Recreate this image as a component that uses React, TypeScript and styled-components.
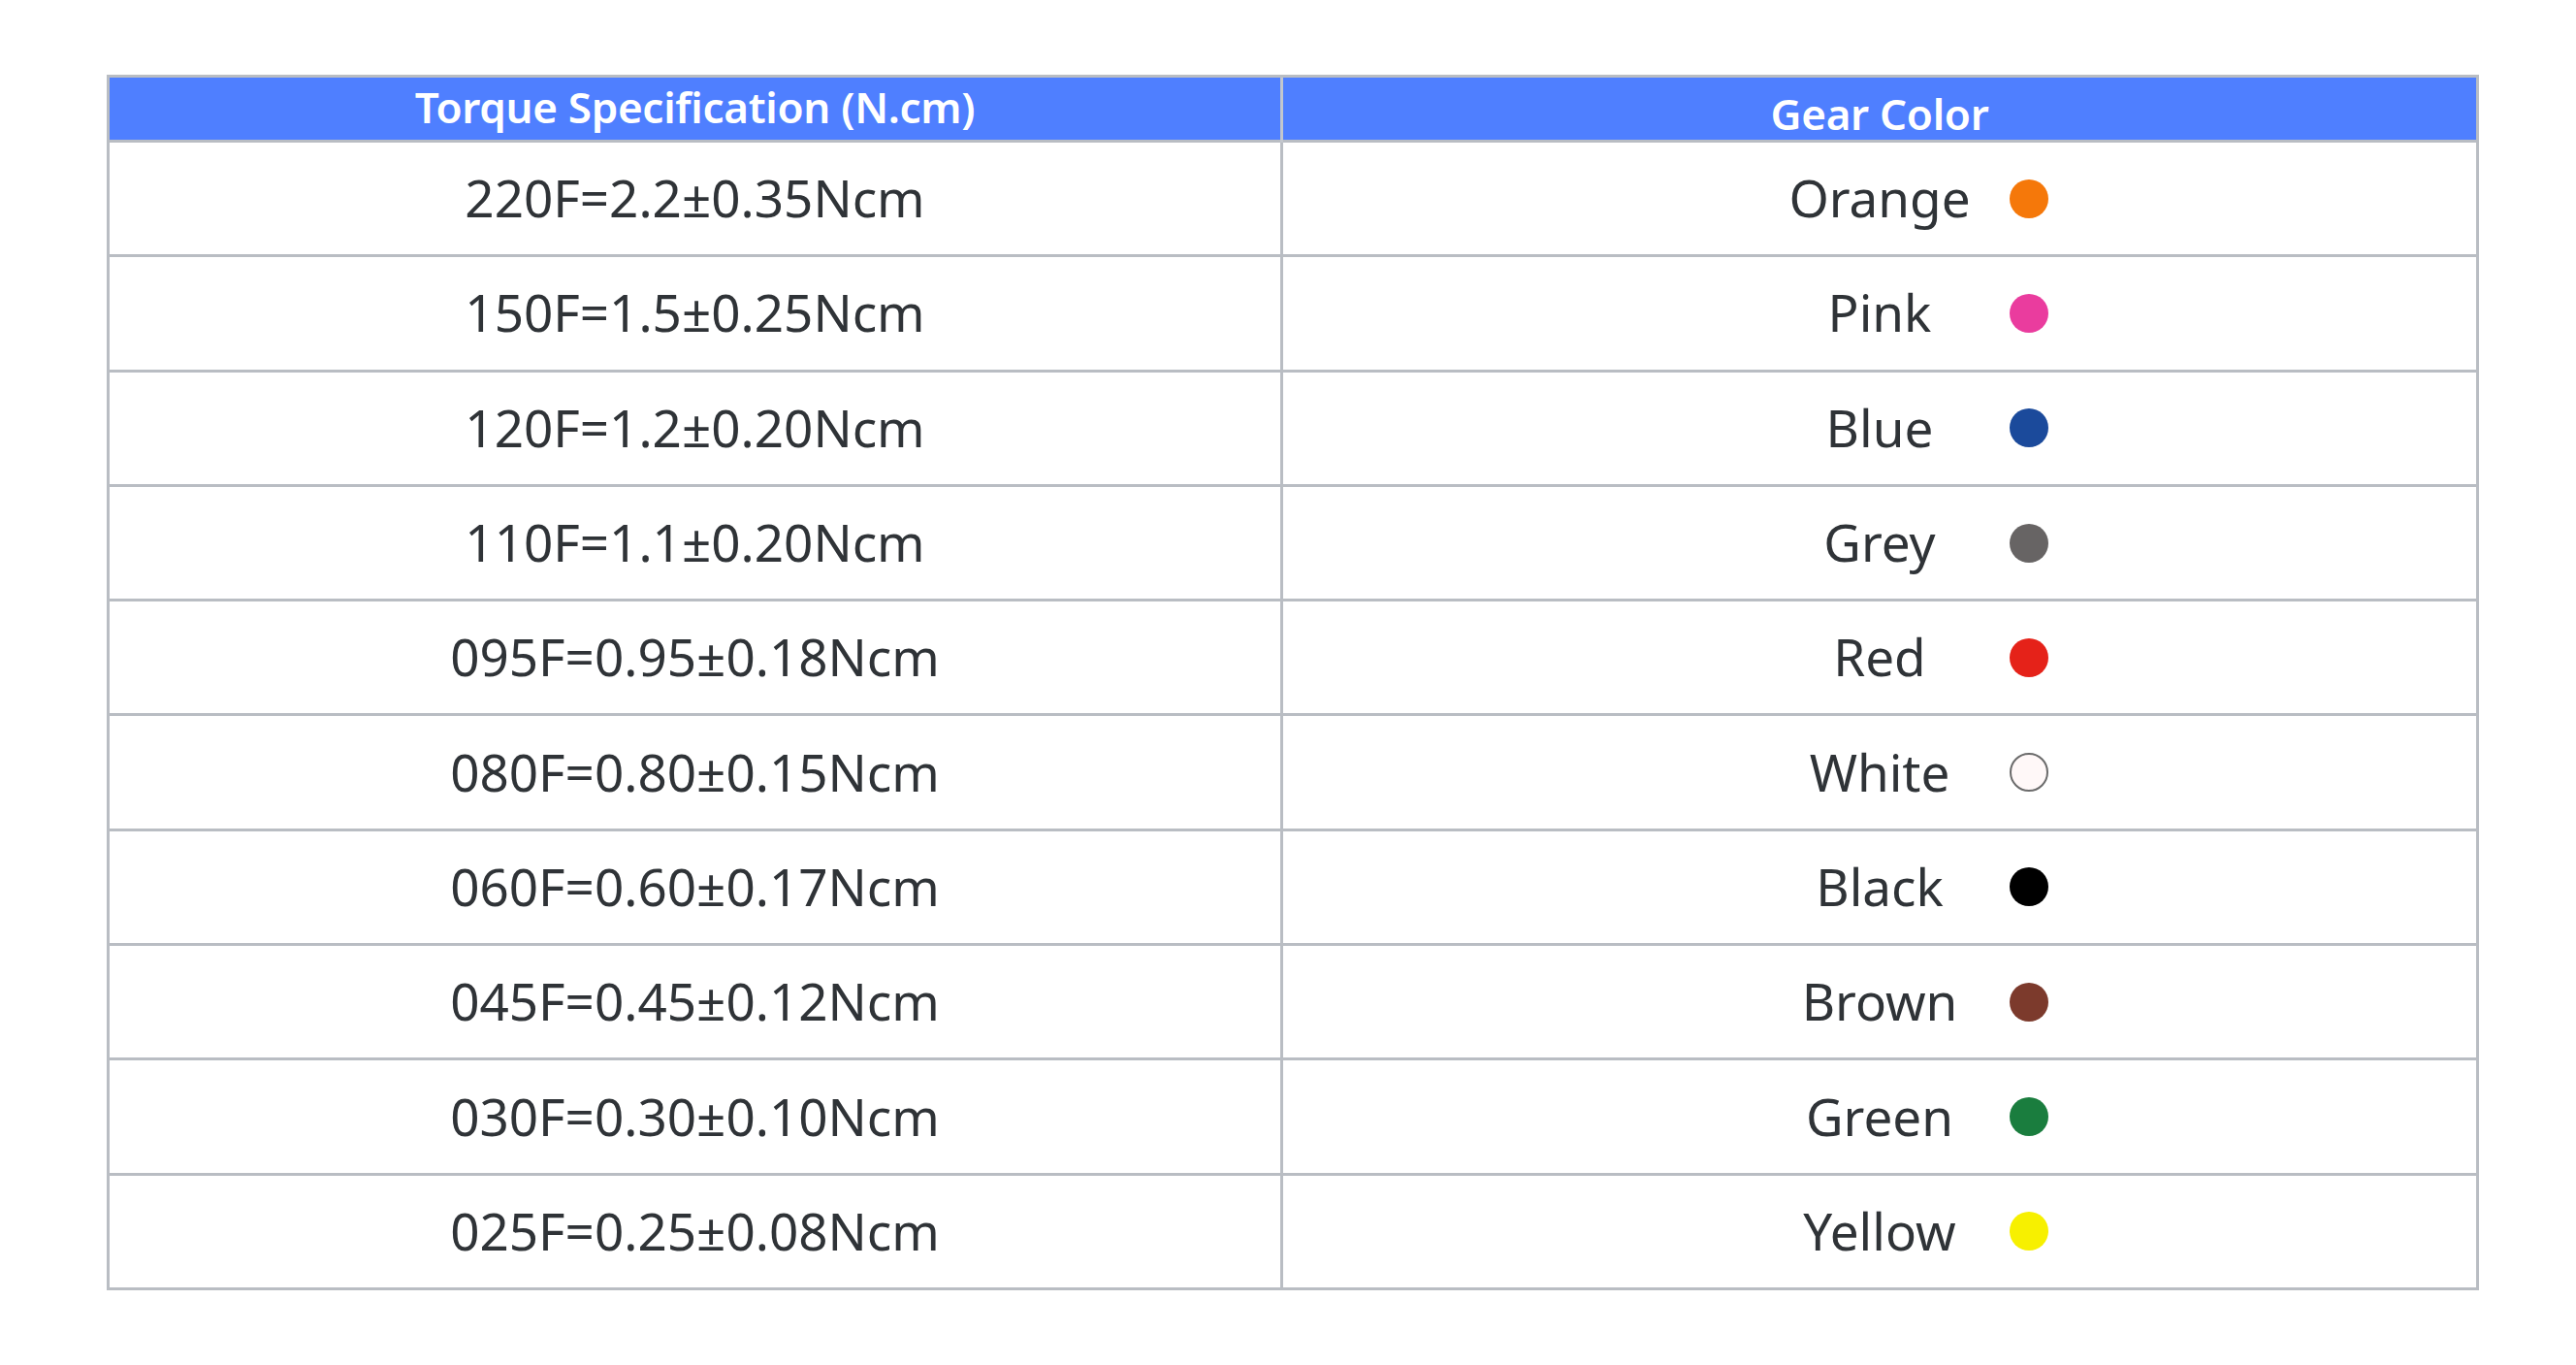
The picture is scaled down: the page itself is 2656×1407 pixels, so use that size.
import React from "react";
import styled, { createGlobalStyle } from "styled-components";

const GlobalStyle = createGlobalStyle`
  html, body {
    margin: 0;
    padding: 0;
    background: #fff;
  }
  body {
    font-family: "Noto Sans", "Open Sans", sans-serif;
  }
`;

const Page = styled.div`
  padding: 77px 0 0 110px;
`;

const Table = styled.div`
  width: 2446px;
  box-sizing: border-box;
  border: 3px solid #b9bdc3;
`;

const Row = styled.div<{ $header?: boolean }>`
  display: grid;
  grid-template-columns: 1207px 1fr;
  height: ${(p) => (p.$header ? "64px" : "115.3px")};
  border-top: ${(p) => (p.$header ? "none" : "3px solid #b9bdc3")};
  background: ${(p) => (p.$header ? "#4f7fff" : "#fff")};
`;

const HeadCell = styled.div<{ $divider?: boolean; $shift?: number }>`
  display: flex;
  align-items: center;
  justify-content: center;
  box-sizing: border-box;
  color: #fff;
  font-size: 44px;
  font-weight: 600;
  letter-spacing: -0.3px;
  padding-top: ${(p) => Math.max(p.$shift || 0, 0)}px;
  padding-bottom: ${(p) => Math.max(-(p.$shift || 0), 0)}px;
  border-left: ${(p) => (p.$divider ? "3px solid #c3c7cd" : "none")};
`;

const SpecCell = styled.div`
  display: flex;
  align-items: center;
  justify-content: center;
  color: #2f3337;
  font-size: 53px;
  padding-bottom: 2px;
`;

const ColorCell = styled.div`
  display: grid;
  grid-template-columns: 1fr 268px 1fr;
  align-items: center;
  border-left: 3px solid #b9bdc3;
  color: #2f3337;
  font-size: 53px;

  .name {
    grid-column: 2;
    text-align: center;
    padding-bottom: 2px;
  }
`;

const Dot = styled.span<{ $color: string; $outline?: boolean }>`
  grid-column: 3;
  justify-self: start;
  width: 40px;
  height: 40px;
  border-radius: 50%;
  box-sizing: border-box;
  background: ${(p) => p.$color};
  border: ${(p) => (p.$outline ? "2px solid #6b6b6b" : "none")};
`;

const rows = [
  { spec: "220F=2.2±0.35Ncm", name: "Orange", color: "#f5780a" },
  { spec: "150F=1.5±0.25Ncm", name: "Pink", color: "#ea3c9e" },
  { spec: "120F=1.2±0.20Ncm", name: "Blue", color: "#1b4a9b" },
  { spec: "110F=1.1±0.20Ncm", name: "Grey", color: "#676464" },
  { spec: "095F=0.95±0.18Ncm", name: "Red", color: "#e52219" },
  { spec: "080F=0.80±0.15Ncm", name: "White", color: "#fff8f8", outline: true },
  { spec: "060F=0.60±0.17Ncm", name: "Black", color: "#000000" },
  { spec: "045F=0.45±0.12Ncm", name: "Brown", color: "#7c3a2c" },
  { spec: "030F=0.30±0.10Ncm", name: "Green", color: "#1a7d3e" },
  { spec: "025F=0.25±0.08Ncm", name: "Yellow", color: "#f7f000" },
];

const App = () => {
  return (
    <>
      <GlobalStyle />
      <Page>
        <Table>
          <Row $header>
            <HeadCell $shift={-10}>Torque Specification (N.cm)</HeadCell>
            <HeadCell $divider $shift={4}>
              Gear Color
            </HeadCell>
          </Row>
          {rows.map((r) => (
            <Row key={r.spec}>
              <SpecCell>{r.spec}</SpecCell>
              <ColorCell>
                <span className="name">{r.name}</span>
                <Dot $color={r.color} $outline={r.outline} />
              </ColorCell>
            </Row>
          ))}
        </Table>
      </Page>
    </>
  );
};

export default App;
